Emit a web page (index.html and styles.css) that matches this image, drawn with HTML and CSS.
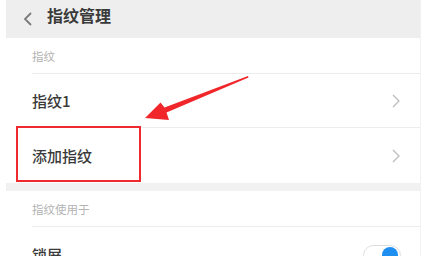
FILE: index.html
```html
<!DOCTYPE html>
<html lang="zh">
<head>
<meta charset="utf-8">
<link rel="stylesheet" href="styles.css">
</head>
<body>
<div class="screen">
  <header class="topbar">
    <svg class="back" width="10" height="14" viewBox="0 0 10 14"><path d="M8 1 L2 7 L8 13" fill="none" stroke="#7a7a7a" stroke-width="1.8"/></svg>
    <span class="title">指纹管理</span>
  </header>
  <div class="section-label">指纹</div>
  <div class="row bordered">
    <span class="row-text">指纹1</span>
    <svg class="chev" width="8" height="14" viewBox="0 0 8 14"><path d="M1 1 L7 7 L1 13" fill="none" stroke="#bdbdbd" stroke-width="1.3"/></svg>
  </div>
  <div class="row">
    <span class="row-text">添加指纹</span>
    <svg class="chev" width="8" height="14" viewBox="0 0 8 14"><path d="M1 1 L7 7 L1 13" fill="none" stroke="#bdbdbd" stroke-width="1.3"/></svg>
  </div>
  <div class="band"></div>
  <div class="section-label">指纹使用于</div>
  <div class="row">
    <span class="row-text">锁屏</span>
    <span class="toggle"><span class="knob"></span></span>
  </div>
</div>
<div class="highlight"></div>
<svg class="arrow" width="430" height="256" viewBox="0 0 430 256"><polygon points="145,118 160.5,102.5 164.5,107.5 248,76 248.5,77.5 166.5,112.5 169,120" fill="#f0262a"/></svg>
</body>
</html>
```

FILE: styles.css
```css
html, body {
  margin: 0;
  padding: 0;
  background: #ffffff;
  width: 430px;
  height: 256px;
  overflow: hidden;
  font-family: "Noto Sans CJK SC", "Noto Sans", sans-serif;
}
.screen {
  margin-left: 6px;
  width: 414px;
  border-right: 1px solid #f2f2f2;
  height: 256px;
  overflow: hidden;
}
.topbar {
  height: 38px;
  background: #eeeeee;
  display: flex;
  align-items: flex-start;
  padding-top: 4px;
  box-sizing: border-box;
}
.back {
  margin-left: 17px;
  margin-top: 8px;
}
.title {
  margin-left: 14px;
  font-size: 16px;
  line-height: 22px;
  font-weight: 700;
  color: #3a3a3a;
}
.section-label {
  height: 36px;
  margin-left: 26px;
  border-bottom: 1px solid #ececec;
  box-sizing: border-box;
  display: flex;
  align-items: center;
  font-size: 11.5px;
  color: #b3b3b3;
}
.row {
  height: 55px;
  margin-left: 26px;
  display: flex;
  align-items: center;
  justify-content: space-between;
  box-sizing: border-box;
}
.row.bordered {
  border-bottom: 1px solid #ececec;
  height: 54px;
}
.row-text {
  font-size: 15px;
  color: #3a3a3a;
  font-weight: 500;
}
.chev {
  margin-right: 20px;
}
.band {
  height: 8px;
  background: #f1f1f1;
}
.toggle {
  width: 38px;
  height: 21px;
  border: 1px solid #dedede;
  border-radius: 11px;
  margin-right: 19px;
  margin-top: 1px;
  display: flex;
  align-items: center;
  justify-content: flex-end;
  box-sizing: border-box;
  background: #fff;
}
.knob {
  width: 16px;
  height: 16px;
  border-radius: 50%;
  background: #1e8ff0;
  margin-right: 2px;
}
.highlight {
  position: absolute;
  left: 16px;
  top: 126px;
  width: 125px;
  height: 56px;
  border: 2.5px solid #ee2a2e;
  box-sizing: border-box;
}
.arrow {
  position: absolute;
  left: 0;
  top: 0;
}
```
